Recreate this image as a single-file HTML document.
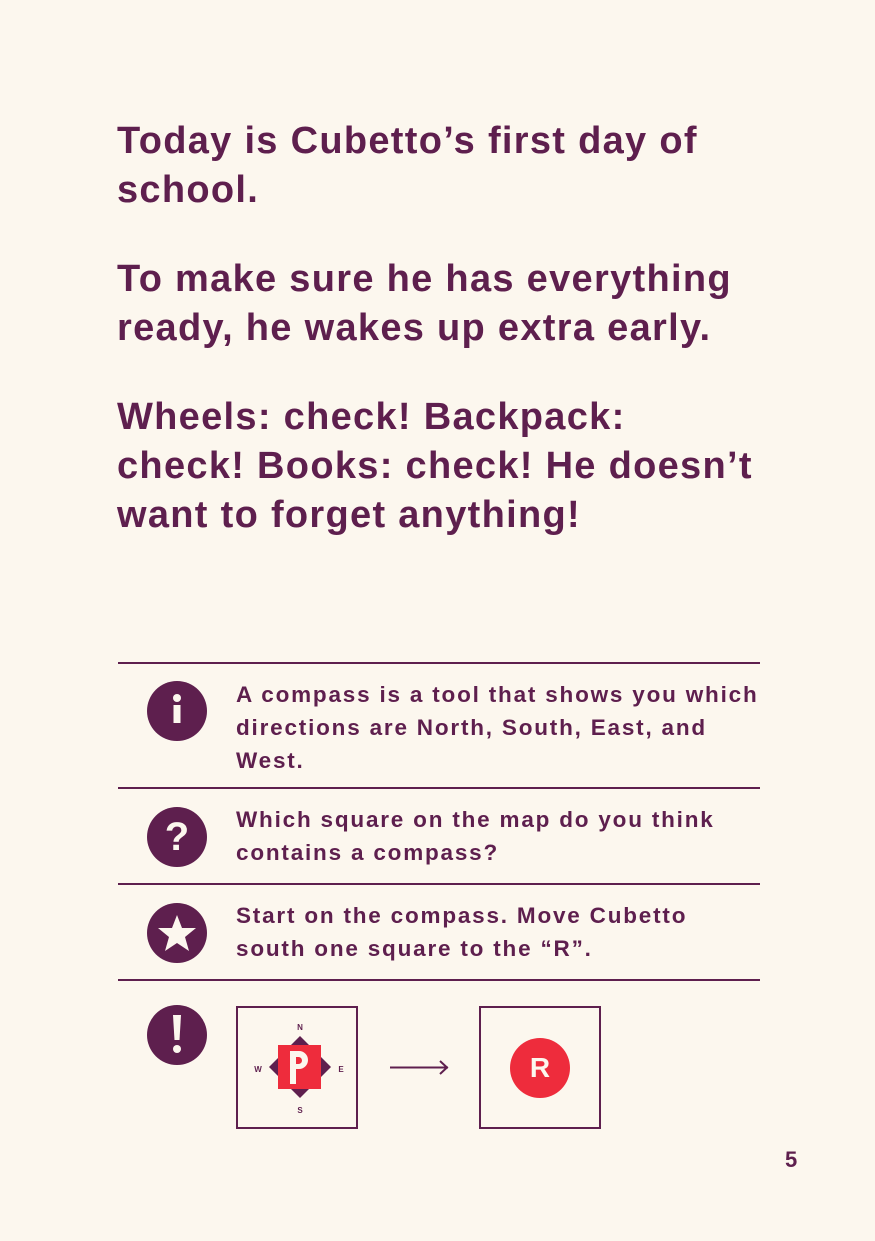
<!DOCTYPE html>
<html><head><style>
body{margin:0;background:#fcf7ee;}
.p{position:relative;width:875px;height:1241px;background:#fcf7ee;font-family:"Liberation Sans",sans-serif;font-weight:bold;color:#5e1f4e;overflow:hidden}
.h{position:absolute;left:117px;font-size:38px;line-height:49px;white-space:nowrap;letter-spacing:1.3px}
.t{position:absolute;left:236px;font-size:22.5px;line-height:33px;white-space:nowrap;letter-spacing:1.8px}
.hr{position:absolute;left:118px;width:642px;height:2px;background:#5e1f4e}
.c{position:absolute;left:147px;width:60px;height:60px;border-radius:50%;background:#5e1f4e;color:#fcf7ee;text-align:center;font-size:40px;line-height:60px}
.box{position:absolute;top:1006px;width:118px;height:119px;border:2px solid #5e1f4e}
</style></head><body><div class="p">
<div class="h" style="top:117px">Today is Cubetto’s first day of<br>school.</div>
<div class="h" style="top:255px">To make sure he has everything<br>ready, he wakes up extra early.</div>
<div class="h" style="top:393px">Wheels: check! Backpack:<br>check! Books: check! He doesn’t<br>want to forget anything!</div>
<div class="hr" style="top:662px"></div>
<div class="hr" style="top:787px"></div>
<div class="hr" style="top:883px"></div>
<div class="hr" style="top:979px"></div>
<div class="c" style="top:681px"><svg width="60" height="60"><circle cx="30" cy="17" r="4" fill="#fcf7ee"/><rect x="26.5" y="24" width="7" height="18" fill="#fcf7ee"/></svg></div>
<div class="c" style="top:807px">?</div>
<div class="c" style="top:903px"><svg width="60" height="60"><polygon points="30,12 35,25 49,25 38,34 42,48 30,40 18,48 22,34 11,25 25,25" fill="#fcf7ee"/></svg></div>
<div class="c" style="top:1005px"><svg width="60" height="60"><path d="M26 10h8l-1.5 25h-5z" fill="#fcf7ee"/><circle cx="30" cy="44" r="4" fill="#fcf7ee"/></svg></div>
<div class="t" style="top:678px">A compass is a tool that shows you which<br>directions are North, South, East, and<br>West.</div>
<div class="t" style="top:803px">Which square on the map do you think<br>contains a compass?</div>
<div class="t" style="top:899px">Start on the compass. Move Cubetto<br>south one square to the “R”.</div>
<div class="box" style="left:236px">
<svg width="118" height="119" style="position:absolute;left:0;top:0">
<polygon points="62,28 93,59 62,90 31,59" fill="#5e1f4e"/>
<rect x="40" y="37" width="43" height="44" fill="#ee2c3c"/>
<path d="M52 43h9a9 9 0 0 1 0 18h-3v15h-6z M58 49v7h2.5a3.5 3.5 0 0 0 0-7z" fill="#fcf7ee" fill-rule="evenodd"/>
<text x="62" y="22" font-size="8" font-family="Liberation Sans" font-weight="bold" fill="#5e1f4e" text-anchor="middle">N</text>
<text x="62" y="105" font-size="8" font-family="Liberation Sans" font-weight="bold" fill="#5e1f4e" text-anchor="middle">S</text>
<text x="20" y="64" font-size="8" font-family="Liberation Sans" font-weight="bold" fill="#5e1f4e" text-anchor="middle">W</text>
<text x="103" y="64" font-size="8" font-family="Liberation Sans" font-weight="bold" fill="#5e1f4e" text-anchor="middle">E</text>
</svg></div>
<svg style="position:absolute;left:388px;top:1058px" width="64" height="20"><path d="M2 9.5h58M52 3l7 6.5-7 6.5" stroke="#5e1f4e" stroke-width="2" fill="none"/></svg>
<div class="box" style="left:479px"><div style="position:absolute;left:29px;top:30px;width:60px;height:60px;border-radius:50%;background:#ee2c3c;color:#fcf7ee;text-align:center;font-size:28px;line-height:60px">R</div></div>
<div style="position:absolute;left:785px;top:1147px;font-size:22px">5</div>
</div></body></html>
